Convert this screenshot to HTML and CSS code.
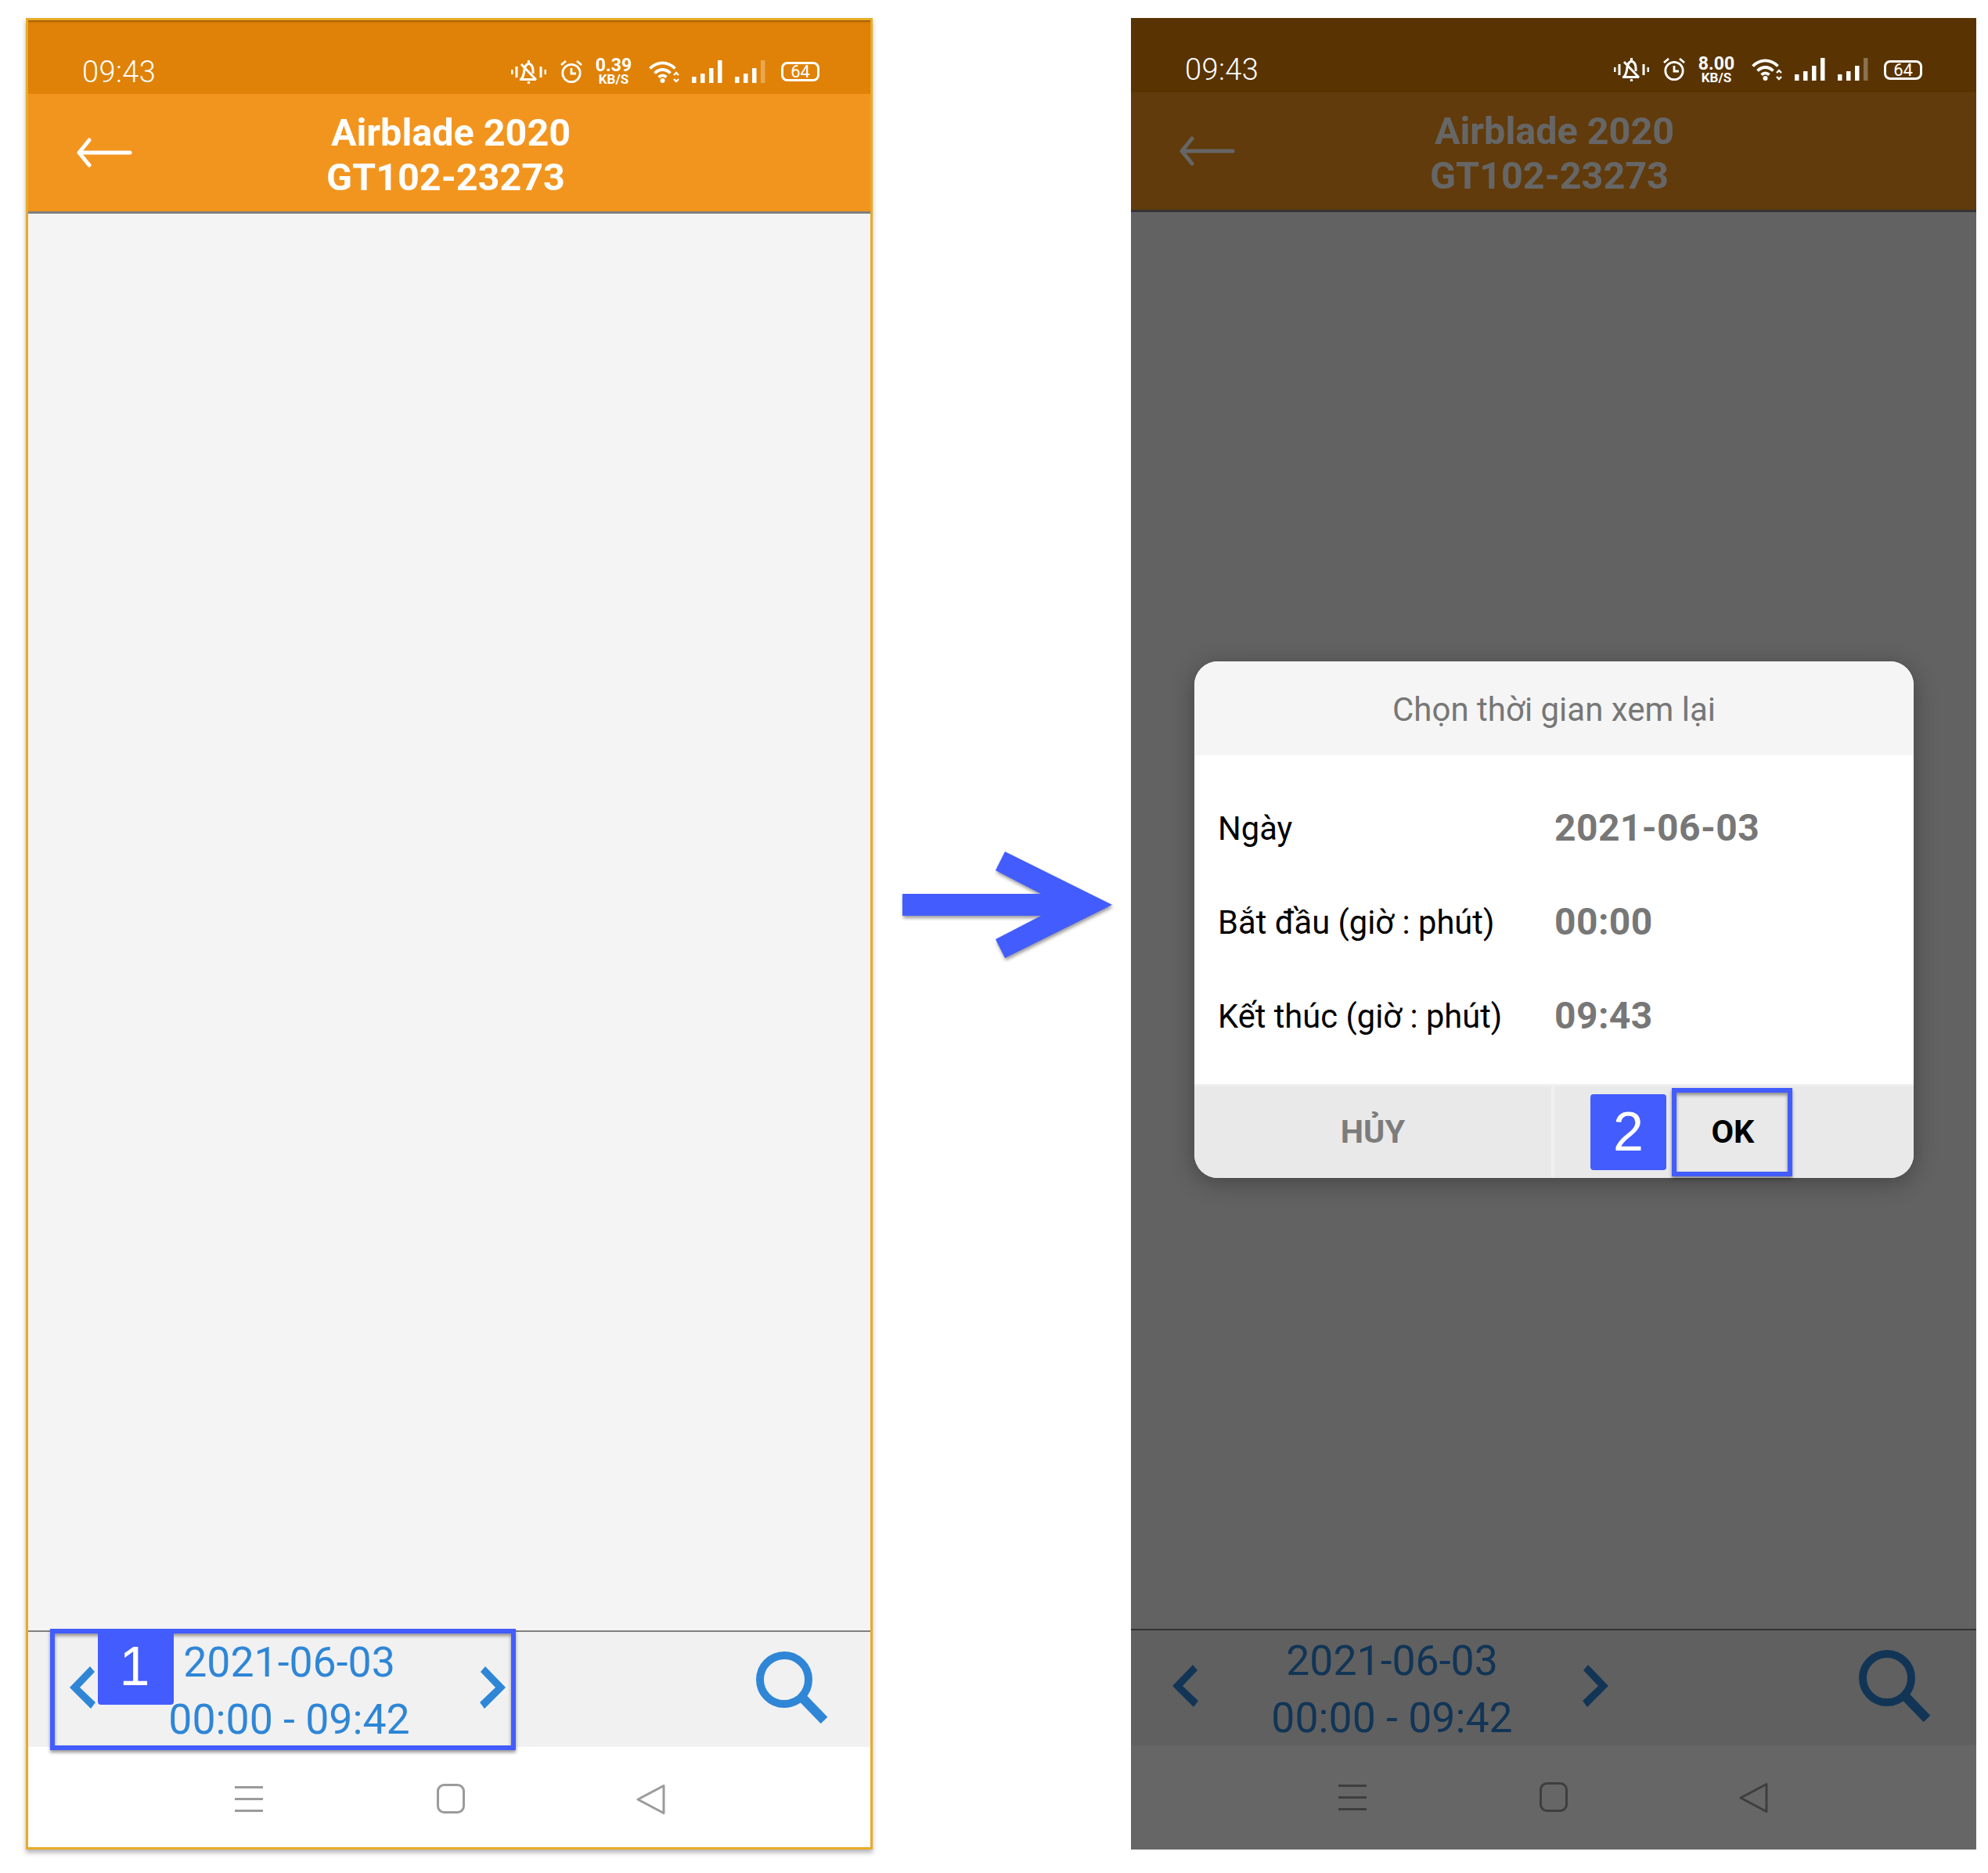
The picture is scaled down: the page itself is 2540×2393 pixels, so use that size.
FILE: index.html
```html
<!DOCTYPE html>
<html lang="en">
<head>
    <meta charset="UTF-8">
    <meta name="viewport" content="width=device-width, initial-scale=1.0">
    <title>Chọn thời gian xem lại</title>
    <link rel="stylesheet" href="styles.css">
</head>
<body>
    <svg class="icon-defs" aria-hidden="true">
        <symbol id="i-bell" viewBox="0 0 45 30">
            <path d="M1 12v6M7 8v14M38 8v14M44 12v6" fill="none" stroke="currentColor" stroke-width="3"/>
            <path d="M11 24.500h21M13 24c3-3 3.500-7 4-12 .5-4 3-7 5.500-8 3 1 5.500 4 5.500 9v4" fill="none" stroke="currentColor" stroke-width="3"/>
            <path d="M13 5l19 20M22.500 0v4" fill="none" stroke="currentColor" stroke-width="3"/>
            <circle cx="22.500" cy="28.500" r="1.800" fill="currentColor"/>
        </symbol>
        <symbol id="i-alarm" viewBox="0 0 28 30">
            <circle cx="14" cy="16.500" r="11.200" fill="none" stroke="currentColor" stroke-width="2.800"/>
            <path d="M14 10v7h6M1 6l6-5M27 6l-6-5" fill="none" stroke="currentColor" stroke-width="2.800"/>
        </symbol>
        <symbol id="i-wifi" viewBox="0 0 39 28">
            <path d="M1.500 9.500C11 0 24 0 33.500 9.500M7.500 15.500c6-6 14-6 20 0M12.500 20.500c3.500-3 6.500-3 10 0" fill="none" stroke="currentColor" stroke-width="3.800"/>
            <circle cx="17.500" cy="25" r="3" fill="currentColor"/>
            <path d="M32 18l3-3 3 3M32 23l3 3 3-3" fill="none" stroke="currentColor" stroke-width="2.400"/>
        </symbol>
        <symbol id="i-signal" viewBox="0 0 39 30">
            <path d="M0 21h5.500v8H0zM11 17h5.500v12H11zM22 10h5.500v19H22zM33 0h5.500v29H33z" fill="currentColor"/>
        </symbol>
        <symbol id="i-signal-low" viewBox="0 0 39 30">
            <path d="M0 21h5.500v8H0zM11 17h5.500v12H11zM22 10h5.500v19H22z" fill="currentColor"/>
            <path d="M33 0h5.500v29H33z" fill="currentColor" opacity="0.3"/>
        </symbol>
        <symbol id="i-back" viewBox="0 0 72 38">
            <path d="M69 19H4M17 3L4 19l13 16" fill="none" stroke="currentColor" stroke-width="5" stroke-linecap="round" stroke-linejoin="round"/>
        </symbol>
        <symbol id="i-prev" viewBox="0 0 34 54">
            <path d="M26 0l6 7-19 20 20 19-6 8L0 27z" fill="currentColor"/>
        </symbol>
        <symbol id="i-next" viewBox="0 0 34 54">
            <path d="M8 0L2 7l19 20L1 46l6 8 27-27z" fill="currentColor"/>
        </symbol>
        <symbol id="i-search" viewBox="0 0 92 92">
            <circle cx="36" cy="36" r="31" fill="none" stroke="currentColor" stroke-width="10"/>
            <path d="M60 60l27 28" fill="none" stroke="currentColor" stroke-width="12"/>
        </symbol>
        <symbol id="i-menu" viewBox="0 0 36 33">
            <path d="M0 1.500h36M0 16.500h36M0 31.500h36" fill="none" stroke="currentColor" stroke-width="3"/>
        </symbol>
        <symbol id="i-home" viewBox="0 0 36 38">
            <rect x="1.500" y="1.500" width="33" height="35" rx="8" fill="none" stroke="currentColor" stroke-width="3"/>
        </symbol>
        <symbol id="i-tri" viewBox="0 0 37 40">
            <path d="M35 2.500V37.500L2 20z" fill="none" stroke="currentColor" stroke-width="3" stroke-linejoin="round"/>
        </symbol>
    </svg>

    <div class="page">
        <section class="phone phone-light">
            <div class="status">
                <span class="time">09:43</span>
                <div class="status-icons">
                    <svg class="ic-bell"><use href="#i-bell"/></svg>
                    <svg class="ic-alarm"><use href="#i-alarm"/></svg>
                    <div class="speed"><b>0.39</b><b class="speed-unit">KB/S</b></div>
                    <svg class="ic-wifi"><use href="#i-wifi"/></svg>
                    <svg class="ic-signal"><use href="#i-signal"/></svg>
                    <svg class="ic-signal"><use href="#i-signal-low"/></svg>
                    <div class="battery">64</div>
                </div>
            </div>
            <header class="header">
                <div class="back"><svg class="ic-back"><use href="#i-back"/></svg></div>
                <div class="title">
                    <div class="title-name">Airblade 2020</div>
                    <div class="title-code">GT102-23273</div>
                </div>
            </header>
            <main class="content"></main>
            <div class="bar">
                <svg class="ic-chevron"><use href="#i-prev"/></svg>
                <div class="range">
                    <div>2021-06-03</div>
                    <div>00:00 - 09:42</div>
                </div>
                <svg class="ic-chevron"><use href="#i-next"/></svg>
                <svg class="ic-search"><use href="#i-search"/></svg>
                <div class="mark mark-range">
                    <div class="badge badge-one">1</div>
                </div>
            </div>
            <nav class="nav">
                <div class="nav-item"><svg class="ic-menu"><use href="#i-menu"/></svg></div>
                <div class="nav-item"><svg class="ic-home"><use href="#i-home"/></svg></div>
                <div class="nav-item"><svg class="ic-tri"><use href="#i-tri"/></svg></div>
            </nav>
        </section>

        <svg class="flow-arrow" viewBox="0 0 272 142">
            <path d="M0 54H177L119 24 131 0 268 68 131 136 119 112 177 82H0z"/>
        </svg>

        <section class="phone phone-dim">
            <div class="status">
                <span class="time">09:43</span>
                <div class="status-icons">
                    <svg class="ic-bell"><use href="#i-bell"/></svg>
                    <svg class="ic-alarm"><use href="#i-alarm"/></svg>
                    <div class="speed"><b>8.00</b><b class="speed-unit">KB/S</b></div>
                    <svg class="ic-wifi"><use href="#i-wifi"/></svg>
                    <svg class="ic-signal"><use href="#i-signal"/></svg>
                    <svg class="ic-signal"><use href="#i-signal-low"/></svg>
                    <div class="battery">64</div>
                </div>
            </div>
            <header class="header">
                <div class="back"><svg class="ic-back"><use href="#i-back"/></svg></div>
                <div class="title">
                    <div class="title-name">Airblade 2020</div>
                    <div class="title-code">GT102-23273</div>
                </div>
            </header>
            <main class="content"></main>
            <div class="bar">
                <svg class="ic-chevron"><use href="#i-prev"/></svg>
                <div class="range">
                    <div>2021-06-03</div>
                    <div>00:00 - 09:42</div>
                </div>
                <svg class="ic-chevron"><use href="#i-next"/></svg>
                <svg class="ic-search"><use href="#i-search"/></svg>
            </div>
            <nav class="nav">
                <div class="nav-item"><svg class="ic-menu"><use href="#i-menu"/></svg></div>
                <div class="nav-item"><svg class="ic-home"><use href="#i-home"/></svg></div>
                <div class="nav-item"><svg class="ic-tri"><use href="#i-tri"/></svg></div>
            </nav>

            <div class="dim"></div>

            <div class="modal">
                <div class="modal-title">Chọn thời gian xem lại</div>
                <div class="modal-body">
                    <div class="modal-row">
                        <span class="modal-label">Ngày</span>
                        <span class="modal-value">2021-06-03</span>
                    </div>
                    <div class="modal-row">
                        <span class="modal-label">Bắt đầu (giờ : phút)</span>
                        <span class="modal-value">00:00</span>
                    </div>
                    <div class="modal-row">
                        <span class="modal-label">Kết thúc (giờ : phút)</span>
                        <span class="modal-value">09:43</span>
                    </div>
                </div>
                <div class="modal-footer">
                    <div class="modal-btn modal-cancel">HỦY</div>
                    <div class="modal-btn modal-ok">OK</div>
                    <div class="badge badge-two">2</div>
                    <div class="mark mark-ok"></div>
                </div>
            </div>
        </section>
    </div>
</body>
</html>
```

FILE: styles.css
```css
body {
    margin: 0;
    background: #fff;
    font-family: Roboto, "Liberation Sans", sans-serif;
}
.icon-defs {
    display: none;
}
.page {
    display: flex;
    align-items: flex-start;
    width: 2540px;
    height: 2393px;
    box-sizing: border-box;
    padding: 23px 0 0 33px;
}

/* phones */
.phone {
    position: relative;
    display: flex;
    flex-direction: column;
    height: 2340px;
    box-sizing: border-box;
}
.phone-light {
    width: 1082px;
    border: 3px solid #e8ab28;
    box-shadow: 0 4px 6px rgba(0, 0, 0, 0.3);
}
.phone-dim {
    width: 1080px;
    margin-left: 20px;
}
.dim {
    position: absolute;
    top: 0;
    right: 0;
    bottom: 0;
    left: 0;
    background-color: rgba(0, 0, 0, 0.6);
}

/* status bar */
.status {
    display: flex;
    align-items: center;
    flex: none;
    height: 95px;
    padding: 0 0 0 69px;
    box-sizing: border-box;
    background-color: #df8207;
    box-shadow: inset 0 3px 2px -1px rgba(120, 70, 0, 0.6);
    color: #fff;
}
.phone-light .status {
    height: 94px;
}
.phone-dim .status {
    box-shadow: none;
}
.time {
    position: relative;
    z-index: 2;
    width: 100px;
    margin-top: 37px;
    font-size: 38px;
    font-weight: 300;
    letter-spacing: 0.400px;
    line-height: 44px;
}
.status-icons {
    position: relative;
    z-index: 2;
    display: flex;
    align-items: center;
    height: 36px;
    margin: 37px 0 0 448px;
}
.ic-bell {
    width: 45px;
    height: 30px;
}
.ic-alarm {
    width: 28px;
    height: 30px;
    margin-left: 18px;
}
.speed {
    display: flex;
    flex-direction: column;
    align-items: center;
    width: 48px;
    margin-left: 16px;
    font-size: 23px;
    line-height: 20px;
}
.speed-unit {
    font-size: 17px;
    line-height: 15px;
}
.ic-wifi {
    width: 39px;
    height: 28px;
    margin-left: 21px;
}
.ic-signal {
    width: 39px;
    height: 30px;
    margin-left: 16px;
}
.battery {
    width: 49px;
    height: 25px;
    margin-left: 20px;
    border: 3px solid #fff;
    border-radius: 8px;
    box-sizing: border-box;
    font-size: 22px;
    font-weight: 400;
    line-height: 19px;
    text-align: center;
}

/* header */
.header {
    display: grid;
    grid-template-columns: 1fr auto 1fr;
    align-items: center;
    flex: none;
    height: 153px;
    box-sizing: border-box;
    background-color: #f2951f;
    border-bottom: 3px solid #808080;
    color: #fff;
}
.phone-dim .title {
    margin-right: 6px;
}
.back {
    display: flex;
    padding-left: 61px;
}
.ic-back {
    width: 72px;
    height: 38px;
}
.title {
    margin: 6px 4px 0 0;
    font-size: 48.500px;
    font-weight: 700;
    line-height: 57px;
    text-align: center;
}
.title-name {
    padding-left: 8px;
}
.title-code {
    padding-right: 5px;
}

.content {
    flex: 1;
    background-color: #f4f4f4;
}

/* bottom bar */
.bar {
    position: relative;
    display: flex;
    align-items: center;
    flex: none;
    height: 149px;
    padding: 0 0 5px 53px;
    box-sizing: border-box;
    background-color: #f1f1f1;
    border-top: 2px solid #808080;
    color: #2f86d6;
}
.ic-chevron {
    flex: none;
    width: 34px;
    height: 54px;
}
.range {
    width: 489px;
    margin-top: 7px;
    padding-left: 4px;
    box-sizing: border-box;
    font-size: 53.600px;
    line-height: 73px;
    text-align: center;
}
.ic-search {
    flex: none;
    width: 92px;
    height: 92px;
    margin-left: 320px;
}

/* bottom nav */
.nav {
    display: flex;
    justify-content: center;
    flex: none;
    height: 128px;
    padding-top: 47px;
    box-sizing: border-box;
    background-color: #fff;
    color: #9b9b9b;
}
.phone-dim .nav {
    height: 133px;
    padding-right: 3px;
}
.nav-item {
    display: flex;
    justify-content: center;
    width: 257px;
}
.ic-menu {
    width: 36px;
    height: 33px;
    margin: 3px 0 0 2px;
}
.ic-home {
    width: 36px;
    height: 38px;
    margin-left: 3px;
}
.ic-tri {
    width: 37px;
    height: 40px;
}

/* arrow between the phones */
.flow-arrow {
    flex: none;
    width: 272px;
    height: 142px;
    margin: 1065px 0 0 38px;
    fill: #435cfd;
    filter: drop-shadow(1px 3px 2px rgba(0, 0, 0, 0.4));
}

/* annotations */
.mark {
    position: absolute;
    border: 6px solid #435cfd;
    box-sizing: border-box;
    box-shadow: 0 3px 4px rgba(0, 0, 0, 0.4), inset 0 3px 4px rgba(0, 0, 0, 0.4);
}
.mark-range {
    top: -4px;
    left: 28px;
    width: 595px;
    height: 155px;
}
.mark-ok {
    top: 5px;
    left: 610px;
    width: 154px;
    height: 113px;
}
.badge {
    position: absolute;
    width: 97px;
    height: 97px;
    background-color: #435cfd;
    border-radius: 4px;
    font-family: "Liberation Sans", Arial, sans-serif;
    font-size: 70px;
    line-height: 97px;
    text-align: center;
    color: #fff;
}
.badge-one {
    top: -6px;
    left: 55px;
    padding-right: 3px;
    width: 94px;
}
.badge-two {
    top: 13px;
    left: 506px;
}

/* dialog */
.modal {
    position: absolute;
    top: 822px;
    left: 81px;
    display: flex;
    flex-direction: column;
    width: 919px;
    height: 660px;
    background-color: #fff;
    border-radius: 30px;
    box-shadow: 0 6px 30px rgba(0, 0, 0, 0.3);
}
.modal-title {
    flex: none;
    height: 120px;
    background-color: #f5f5f5;
    border-radius: 30px 30px 0 0;
    font-size: 42px;
    font-weight: 400;
    line-height: 124px;
    text-align: center;
    color: #777;
}
.modal-body {
    flex: 1;
    padding-top: 32px;
}
.modal-row {
    display: flex;
    align-items: center;
    height: 120px;
    padding-left: 30px;
}
.modal-label {
    width: 430px;
    margin-top: 2px;
    font-size: 41.700px;
    color: #000;
}
.modal-value {
    font-size: 48px;
    font-weight: 700;
    letter-spacing: 0.400px;
    color: #777;
}
.modal-footer {
    position: relative;
    display: flex;
    flex: none;
    height: 120px;
    background-color: #e9e9e9;
    border-radius: 0 0 30px 30px;
    box-shadow: inset 0 3px 3px -1px #f2f2f2;
}
.modal-btn {
    flex: 1;
    font-size: 41.500px;
    font-weight: 700;
    line-height: 122px;
    text-align: center;
}
.modal-cancel {
    border-right: 4px solid #f0f0f0;
    color: #7c7c7c;
}
.modal-ok {
    padding-right: 3px;
    color: #000;
}
```
